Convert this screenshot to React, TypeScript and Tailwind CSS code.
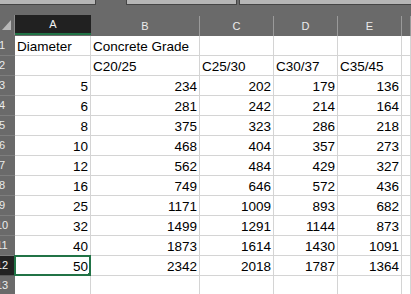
const columns = ["A", "B", "C", "D", "E", ""];

type Cell = { v: string; align: "left" | "right" };

const L = (v: string): Cell => ({ v, align: "left" });
const R = (v: string): Cell => ({ v, align: "right" });
const E: Cell = { v: "", align: "left" };

const numbers = [
  [5, 234, 202, 179, 136],
  [6, 281, 242, 214, 164],
  [8, 375, 323, 286, 218],
  [10, 468, 404, 357, 273],
  [12, 562, 484, 429, 327],
  [16, 749, 646, 572, 436],
  [25, 1171, 1009, 893, 682],
  [32, 1499, 1291, 1144, 873],
  [40, 1873, 1614, 1430, 1091],
  [50, 2342, 2018, 1787, 1364],
];

const rows: Cell[][] = [
  [L("Diameter"), L("Concrete Grade"), E, E, E, E],
  [E, L("C20/25"), L("C25/30"), L("C30/37"), L("C35/45"), E],
  ...numbers.map((r) => [...r.map((n) => R(String(n))), E]),
  [E, E, E, E, E, E],
];

const SELECTED_ROW = 12;

const TopStrip = () => (
  <div className="flex h-[5px]">
    <div className="w-[96px] bg-[#b6b6b6] border-r border-b border-[#454545]" />
    <div className="w-[30px]" />
    <div className="w-[111px] bg-[#b6b6b6] border-l border-r border-b border-[#454545]" />
    <div className="w-[2px]" />
    <div className="flex-1 bg-[#b6b6b6] border-l border-b border-[#454545]" />
  </div>
);

const Corner = () => (
  <div className="h-[20px] bg-[#6a6a6a] border-r border-[#8c8c8c]">
    <svg width="15" height="20" viewBox="0 0 15 20">
      <polygon points="11,5 11,15 2,15" fill="#b8b8b8" />
    </svg>
  </div>
);

export default function App() {
  return (
    <div className="w-[411px] h-[294px] overflow-hidden bg-[#6a6a6a] font-['Liberation_Sans',Arial,sans-serif]">
      <TopStrip />
      <div className="h-[10px]" />
      <div className="grid grid-cols-[15px_76px_109px_74px_64px_64px_1fr]">
        <Corner />
        {columns.map((c, i) => (
          <div
            key={c + i}
            className={
              i === 0
                ? "h-[20px] bg-[#212121] border-b-2 border-[#217346] flex items-center justify-center text-[11px] text-[#f2f2f2]"
                : "h-[20px] bg-[#6a6a6a] border-r border-[#9a9a9a] flex items-center justify-center text-[11px] text-[#ececec] mt-[1px]"
            }
          >
            {c}
          </div>
        ))}

        {rows.map((row, r) => {
          const n = r + 1;
          const sel = n === SELECTED_ROW;
          return [
            <div
              key={"h" + n}
              className={
                sel
                  ? "h-[20px] overflow-hidden flex justify-end items-center bg-[#212121] text-[#f2f2f2] text-[11px] border-b border-[#555]"
                  : "h-[20px] overflow-hidden flex justify-end items-center bg-[#6a6a6a] text-[#ececec] text-[11px] border-b border-[#7e7e7e]"
              }
            >
              <span className="w-[26px] shrink-0 text-center">{n}</span>
            </div>,
            ...row.map((cell, c) => (
              <div
                key={n + "-" + c}
                className={
                  "relative h-[20px] bg-white border-r border-b border-[#d4d4d4] flex items-end px-[2px] text-[13.5px] leading-[16px] text-black whitespace-nowrap " +
                  (cell.align === "right" ? "justify-end" : "justify-start")
                }
              >
                {cell.v}
                {sel && c === 0 && (
                  <>
                    <div className="absolute -top-[1px] -left-[1px] -right-[1px] -bottom-[1px] border-2 border-[#217346]" />
                    <div className="absolute -right-[3px] -bottom-[3px] w-[5px] h-[5px] bg-[#217346]" />
                  </>
                )}
              </div>
            )),
          ];
        })}
      </div>
    </div>
  );
}
